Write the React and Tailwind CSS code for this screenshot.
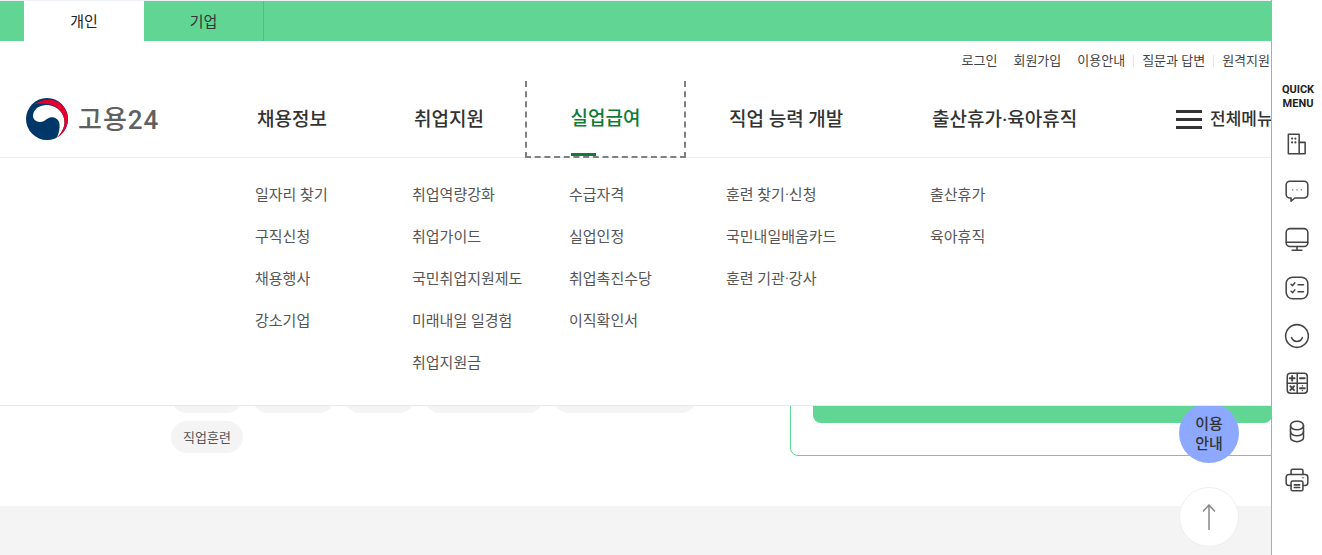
import React from "react";

const nav = "flex shrink-0 items-center pt-[2px] text-[19px] font-medium";

const menus = [
  { w: "w-[157px]", items: ["일자리 찾기", "구직신청", "채용행사", "강소기업"] },
  { w: "w-[157px]", items: ["취업역량강화", "취업가이드", "국민취업지원제도", "미래내일 일경험", "취업지원금"] },
  { w: "w-[157px]", items: ["수급자격", "실업인정", "취업촉진수당", "이직확인서"] },
  { w: "w-[204px]", items: ["훈련 찾기·신청", "국민내일배움카드", "훈련 기관·강사"] },
  { w: "w-[120px]", items: ["출산휴가", "육아휴직"] },
];

const chips = ["w-[72px]", "w-[83px]", "w-[71px]", "w-[120px]", "w-[144px]"];

const Icon = ({ children }) => (
  <svg className="-m-px" width="26" height="26" viewBox="0 0 24 24" fill="none" stroke="#444" strokeWidth="1.400" strokeLinecap="round" strokeLinejoin="round">
    {children}
  </svg>
);

const quickIcons = [
  <Icon key="building">
    <path d="M4 3h10v18H4z" />
    <path d="M14 10.500h5.500V21H14" />
    <path d="M7.500 7h.01M10.500 7h.01M7.500 10.500h.01M10.500 10.500h.01" strokeWidth="2" />
  </Icon>,
  <Icon key="chat">
    <path d="M5.500 2h13A3.500 3.500 0 0 1 22 5.500V14a3.500 3.500 0 0 1-3.500 3.500H10L6.500 20.500V17.500h-1A3.500 3.500 0 0 1 2 14V5.500A3.500 3.500 0 0 1 5.500 2z" />
    <path d="M8 10h.01M12 10h.01M16 10h.01" strokeWidth="1.300" />
  </Icon>,
  <Icon key="monitor">
    <rect x="2" y="1.500" width="20" height="16.500" rx="3.500" />
    <path d="M2 14h20M12 18v3.500M7.500 21.500h9" />
  </Icon>,
  <Icon key="check">
    <rect x="2" y="2" width="20" height="20" rx="6" />
    <path d="M6.500 8.500l1.500 1.300 2-2.600M6.500 15l1.500 1.300 2-2.600M13 9h5M13 15.500h5" />
  </Icon>,
  <Icon key="smile">
    <circle cx="12" cy="12" r="10.500" />
    <path d="M7 13.500c1 2.500 3 3.500 5 3.500s4-1 5-3.500" />
  </Icon>,
  <Icon key="calc">
    <rect x="3" y="2" width="18.500" height="18.500" rx="3" />
    <path d="M12.200 2v18.500M3 11.200h18.500" />
    <path d="M5.300 6.700h4.500M7.500 4.500v4.500M14.700 6.700h4.500M5.800 14l3.500 3.700M9.300 14l-3.500 3.700M14.700 15.900h4.500" strokeWidth="1.700" />
    <path d="M17 13.700h.01M17 18.100h.01" />
  </Icon>,
  <Icon key="db">
    <ellipse cx="12" cy="6" rx="6" ry="4" />
    <path d="M6 6v11c0 2.200 2.700 4 6 4s6-1.800 6-4V6" />
    <path d="M6 11.500c0 2.200 2.700 4 6 4s6-1.800 6-4" />
  </Icon>,
  <Icon key="print">
    <path d="M6.500 7V3.500A1.500 1.500 0 0 1 8 2h8a1.500 1.500 0 0 1 1.500 1.500V7" />
    <path d="M6.500 17H4.500A2.500 2.500 0 0 1 2 14.500V9.500A2.500 2.500 0 0 1 4.500 7h15A2.500 2.500 0 0 1 22 9.500v5a2.500 2.500 0 0 1-2.500 2.500h-2" />
    <rect x="6.500" y="13" width="11" height="9" rx="1.500" />
    <path d="M9.500 16.500h5M9.500 19h5M17.500 10h.01" />
  </Icon>,
];

const Logo = () => (
  <svg width="42" height="42" viewBox="0 0 42 42">
    <circle cx="21" cy="21" r="21" fill="#003668" />
    <path d="M7 17C8 10 15 6.500 22 7c10 1 17 9 16.500 18-.5 6-3.500 11-7.500 14.500 2-4.500 3-9.500 2.500-13.500C33 21 28 18.500 24 19.500 20 20.500 19 24 14 24 10 24 6.500 21 7 17z" fill="#fff" />
    <path d="M9 6C15 1.500 25 0 32 4c6.500 4 10 10.500 10 17 0 8-5 15-10.500 18.500C36 34 39 29 38.500 23.500 38 15 31 7 22 6 17.500 5.500 13 5.500 9 6z" fill="#e4002b" />
  </svg>
);

export default function App() {
  return (
    <div className="flex h-[555px] w-[1322px] overflow-hidden bg-white font-['Roboto','Noto_Sans_CJK_KR',sans-serif] text-[#333]">
      <div className="relative w-[1271px] shrink-0">
        {/* top band */}
        <div className="flex h-[41px] border-t border-[#eef1f6] bg-[#61d694] pl-6 text-[15px] leading-[42px]">
          <div className="w-[120px] bg-white text-center text-[#222]">개인</div>
          <div className="w-[120px] border-r border-[#50c082] text-center text-[#333]">기업</div>
        </div>

        {/* utility links */}
        <div className="mr-px flex h-10 items-center justify-end gap-4 text-[13px] text-[#444]">
          <span>로그인</span>
          <span>회원가입</span>
          <span>이용안내</span>
          <span className="-ml-2 flex items-center gap-2 before:h-3 before:w-px before:bg-[#e5e5e5]">질문과 답변</span>
          <span className="-ml-2 flex items-center gap-2 before:h-3 before:w-px before:bg-[#e5e5e5]">원격지원</span>
        </div>

        {/* main nav */}
        <div className="flex h-[77px] items-stretch border-b border-[#eee] pl-[26px]">
          <div className="flex w-[231px] shrink-0 items-center gap-[10px] pb-[1px]">
            <Logo />
            <span className="pt-[3px] text-[26px] font-medium tracking-[1px] text-[#606060]">고용24</span>
          </div>
          <div className={`${nav} w-[157px]`}>채용정보</div>
          <div className={`${nav} w-[111px]`}>취업지원</div>
          <div className={`${nav} relative -mb-px w-[161px] justify-center border-x-2 border-b-2 border-dashed border-[#808080] text-[#0e7c36]`}>
            실업급여
            <span className="absolute bottom-0 left-[44px] h-[3px] w-[25px] bg-[#0e7c36]" />
          </div>
          <div className={`${nav} w-[246px] pl-[43px]`}>직업 능력 개발</div>
          <div className={`${nav} w-[244px]`}>출산휴가·육아휴직</div>
          <div className="flex w-[95px] shrink-0 items-center gap-2 overflow-hidden whitespace-nowrap text-[17px] font-medium">
            <span className="flex h-[19px] w-[26px] shrink-0 flex-col justify-between">
              <span className="h-[3px] bg-[#333]" />
              <span className="h-[3px] bg-[#333]" />
              <span className="h-[3px] bg-[#333]" />
            </span>
            <span className="pt-[2px]">전체메뉴</span>
          </div>
        </div>

        {/* page under the menu */}
        <div className="flex h-[348px] items-end overflow-hidden pb-[53px] pl-[171px]">
          <div className="w-[619px]">
            <div className="flex gap-[9px]">
              {chips.map((w) => (
                <span key={w} className={`h-8 rounded-2xl bg-[#f4f4f4] ${w}`} />
              ))}
            </div>
            <span className="mt-2 block h-8 w-[72px] rounded-2xl bg-[#f4f4f4] text-center text-[13px] leading-[34px] text-[#555]">직업훈련</span>
          </div>
          <div className="-mb-[3px] -mr-4 flex h-[100px] flex-1 items-end rounded-bl-lg border border-[#61d694] pb-[32px] pl-[22px] pr-[14px]">
            <div className="relative h-[40px] flex-1 rounded-lg bg-[#61d694]">
              <span className="absolute left-[239px] top-[22px] h-px w-[11px] bg-[#52b981]" />
            </div>
          </div>
        </div>
        <div className="h-[49px] bg-[#f4f4f4]" />

        {/* floating buttons */}
        <div className="absolute left-[1179px] top-[403px] flex h-[60px] w-[60px] items-center justify-center rounded-full bg-[#8ca9ff] pt-[2px] text-center text-[15px] font-medium leading-[20px] text-[#333]">
          이용<br />안내
        </div>
        <div className="absolute left-[1179px] top-[487px] flex h-[60px] w-[60px] items-center justify-center rounded-full border border-[#eee] bg-white">
          <svg width="16" height="26" viewBox="0 0 16 26" fill="none" stroke="#888" strokeWidth="1.500">
            <path d="M8 26V1M2 7.500L8 1l6 6.500" />
          </svg>
        </div>

        {/* open dropdown */}
        <div className="absolute left-0 right-0 top-[158px] flex h-[248px] border-b border-[#e8e8e8] bg-white pl-[255px] pt-[26px] text-[15px] text-[#555]">
          {menus.map((m) => (
            <ul key={m.items[0]} className={`flex shrink-0 flex-col gap-[20px] ${m.w}`}>
              {m.items.map((t) => (
                <li key={t} className="h-[22px] leading-[22px]">{t}</li>
              ))}
            </ul>
          ))}
        </div>
      </div>

      {/* quick menu */}
      <aside className="flex w-[51px] shrink-0 flex-col items-center border-l border-[#61d694] bg-white pt-[83px]">
        <div className="pl-[2px] text-center text-[11px] font-bold leading-[14px] text-[#222]">QUICK<br />MENU</div>
        <div className="mt-[21px] flex flex-col gap-6">{quickIcons}</div>
      </aside>
    </div>
  );
}
